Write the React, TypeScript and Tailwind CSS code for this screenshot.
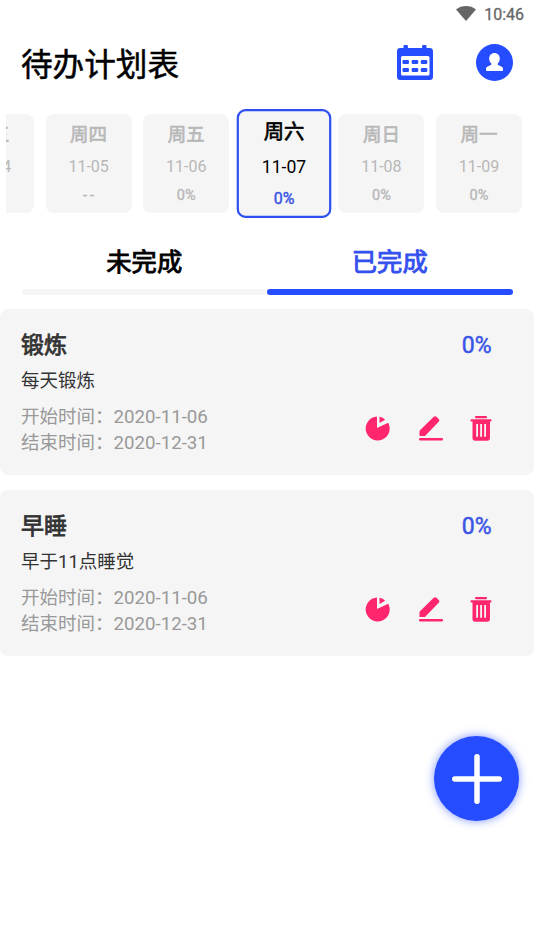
import React, { useState } from 'react';

interface Day {
  name: string;
  date: string;
  rate: string;
}

interface Plan {
  id: number;
  title: string;
  desc: string;
  start: string;
  end: string;
  rate: string;
}

const days: Day[] = [
  { name: '周三', date: '11-04', rate: '--' },
  { name: '周四', date: '11-05', rate: '--' },
  { name: '周五', date: '11-06', rate: '0%' },
  { name: '周六', date: '11-07', rate: '0%' },
  { name: '周日', date: '11-08', rate: '0%' },
  { name: '周一', date: '11-09', rate: '0%' },
];

const plans: Plan[] = [
  { id: 1, title: '锻炼', desc: '每天锻炼', start: '2020-11-06', end: '2020-12-31', rate: '0%' },
  { id: 2, title: '早睡', desc: '早于11点睡觉', start: '2020-11-06', end: '2020-12-31', rate: '0%' },
];

const StatusBar = () => (
  <div className="flex h-7 items-center justify-end pr-[10px] text-[#666]">
    <svg className="mr-[8px] mb-[2px] h-[15px] w-5" viewBox="0 0 20 15" fill="currentColor">
      <path d="M0 3.4C5.6-1.1 14.4-1.1 20 3.4L10 15z" />
    </svg>
    <span className="pt-px text-[16px] leading-7 [-webkit-text-stroke:0.300px_currentColor]">10:46</span>
  </div>
);

const CalendarIcon = () => (
  <svg className="mb-[2px] h-[35px] w-9" viewBox="0 0 36 35">
    <path fill="#264cff" d="M6.5 3V1.2C6.5.4 7 0 7.7 0h2c.7 0 1.2.4 1.2 1.2V3h14.2V1.2c0-.8.5-1.2 1.2-1.2h2c.7 0 1.2.4 1.2 1.2V3H33c1.7 0 3 1.3 3 3v26c0 1.7-1.3 3-3 3H3c-1.7 0-3-1.3-3-3V6c0-1.7 1.3-3 3-3z" />
    <rect x="4" y="11" width="28.5" height="19.5" rx="1.5" fill="#fff" />
    <g fill="#264cff">
      <rect x="5.5" y="15" width="6.5" height="4" rx="1.2" />
      <rect x="14.7" y="15" width="6.5" height="4" rx="1.2" />
      <rect x="23.8" y="15" width="6.5" height="4" rx="1.2" />
      <rect x="5.5" y="23" width="6.5" height="4" rx="1.2" />
      <rect x="14.7" y="23" width="6.5" height="4" rx="1.2" />
      <rect x="23.8" y="23" width="6.5" height="4" rx="1.2" />
    </g>
  </svg>
);

const UserIcon = () => (
  <svg className="mb-px h-[37px] w-[37px]" viewBox="0 0 37 37">
    <circle cx="18.5" cy="18.5" r="18.5" fill="#264cff" />
    <path fill="#fff" d="M18.500 9c3.100 0 5.300 2.300 5.300 5.400 0 2.100-.8 3.900-2.100 5v1.400l4.100 1.900c.9.5 1.200 1.300 1.200 2.300v1c0 .7-.4 1-1 1H11c-.6 0-1-.3-1-1v-1c0-1 .3-1.800 1.200-2.300l4.100-1.900v-1.400c-1.300-1.100-2.100-2.900-2.100-5C13.200 11.300 15.400 9 18.500 9z" />
  </svg>
);

const DayCard = ({ day, active, onClick }: { day: Day; active: boolean; onClick: () => void }) => (
  <button
    onClick={onClick}
    className={`flex h-[99px] w-[86px] shrink-0 flex-col items-center rounded-lg bg-[#f5f5f5] ${active ? 'scale-110 text-black outline-[2.5px] -outline-offset-[2.5px] outline-[#2f4ff0]' : 'text-[#b8b8b8]'}`}
  >
    <span className="mt-2 text-[18.5px] leading-[26px] [-webkit-text-stroke:0.6px_currentColor]">{day.name}</span>
    <span className="mt-[8px] text-[16px] leading-[22px]">{day.date}</span>
    <span className={`mt-2 text-[14.5px] leading-5 [-webkit-text-stroke:0.4px_currentColor] ${active ? 'text-[#3a55e6]' : ''} ${day.rate === '--' ? 'pl-[3px] tracking-[3px]' : ''}`}>{day.rate}</span>
  </button>
);

const PlanCard = ({ plan }: { plan: Plan }) => (
  <div className="flex h-[166px] justify-between rounded-lg bg-[#f5f5f5] pr-[42.5px] pl-[21px]">
    <div className="pt-[21px]">
      <h2 className="text-[23px] leading-8 text-[#333] [-webkit-text-stroke:0.8px_currentColor]">{plan.title}</h2>
      <p className="mt-[6px] text-[18.5px] leading-[26px] text-[#333]">{plan.desc}</p>
      <div className="mt-[10px] text-[18.5px] leading-[26px] text-[#999]">
        <p>开始时间：<span className="text-[18.7px]">{plan.start}</span></p>
        <p>结束时间：<span className="text-[18.7px]">{plan.end}</span></p>
      </div>
    </div>
    <div className="flex flex-col items-end pt-[21px]">
      <span className="text-[23px] leading-8 text-[#3a55e6] [-webkit-text-stroke:0.5px_currentColor]">{plan.rate}</span>
      <div className="mt-[54px] flex items-center text-[#ff266e]">
        <svg className="h-[26px] w-[26px]" viewBox="0 0 26 26" fill="currentColor">
          <path d="M12 .5V12l11.200-5.300A12 12 0 1 1 12 .5z" />
          <path d="M14.500.7c2.400.4 4.200 1.500 5.600 3.100L14.500 7z" />
        </svg>
        <svg className="ml-[27px] h-[26px] w-[26px]" viewBox="0 0 26 26" fill="currentColor">
          <path d="M1.500 20v-5.300L15.700.8c.9-.8 2-.8 2.800 0L20.700 3c.9.9.9 1.900 0 2.800L7 20z" />
          <rect x="1" y="22" width="24" height="2.500" rx="1.200" />
        </svg>
        <svg className="ml-[26px] h-[26px] w-[22px]" viewBox="0 0 22 26" fill="currentColor">
          <rect x="5" y="0" width="12" height="2.200" rx="1" />
          <path fillRule="evenodd" d="M1.500 3.300h19c.7 0 1 .4 1 1.100s-.3 1.100-1 1.100H20V22c0 1.800-1 2.800-2.800 2.800H5.300c-1.800 0-2.800-1-2.800-2.800V5.500h-1c-.7 0-1-.4-1-1.100s.3-1.100 1-1.100zM6.200 8v12.800H8V8zm4 0v12.800h1.800V8zm4 0v12.800H16V8z" />
        </svg>
      </div>
    </div>
  </div>
);

export default function App() {
  const [current, setCurrent] = useState('11-07');
  const [tab, setTab] = useState<'TODO' | 'DONE'>('DONE');

  return (
    <div className="relative h-[949px] w-[534px] overflow-hidden bg-white font-[Roboto,'Noto_Sans_CJK_SC',sans-serif]">
      <StatusBar />

      {/* Header */}
      <header className="flex h-[70px] items-center justify-between pr-[21px] pl-[21px]">
        <h1 className="pt-[5px] text-[31.6px] leading-[46px] [-webkit-text-stroke:0.5px_currentColor]">待办计划表</h1>
        <div className="flex items-center gap-[43px]">
          <CalendarIcon />
          <UserIcon />
        </div>
      </header>

      {/* Week strip */}
      <div className="mx-[6px] flex h-[131px] items-center justify-end gap-[11.6px] overflow-hidden pr-[6px]">
        {days.map(day => (
          <DayCard key={day.date} day={day} active={current === day.date} onClick={() => setCurrent(day.date)} />
        ))}
      </div>

      {/* Tabs */}
      <div className="mx-[21.5px] mt-[13px] flex">
        <button onClick={() => setTab('TODO')} className={`h-[47px] flex-1 pb-[5px] text-[25.3px] leading-[38px] [-webkit-text-stroke:0.9px_currentColor] ${tab === 'TODO' ? 'text-[#3450ee]' : 'text-black'}`}>
          未完成
        </button>
        <button onClick={() => setTab('DONE')} className={`h-[47px] flex-1 pb-[5px] text-[25.3px] leading-[38px] [-webkit-text-stroke:0.9px_currentColor] ${tab === 'DONE' ? 'text-[#3450ee]' : 'text-black'}`}>
          已完成
        </button>
      </div>
      <div className={`mx-[21.5px] flex h-[6px] rounded-full bg-[#f5f5f5] ${tab === 'DONE' ? 'justify-end' : ''}`}>
        <div className="h-full w-1/2 rounded-full bg-[#264cff]" />
      </div>

      {/* Plan list */}
      <div className="mt-[14px] flex flex-col gap-[15px]">
        {plans.map(plan => <PlanCard key={plan.id} plan={plan} />)}
      </div>

      <button className="absolute right-[15px] bottom-[128px] flex h-[85px] w-[85px] items-center justify-center rounded-full bg-[#264cff] shadow-[0_0_10px_rgba(38,76,255,0.6)]">
        <svg className="h-[50px] w-[50px]" viewBox="0 0 50 50" stroke="#fff" strokeWidth="5.5" strokeLinecap="round">
          <path d="M25 2.800v44.400M2.800 25h44.400" />
        </svg>
      </button>
    </div>
  );
}
